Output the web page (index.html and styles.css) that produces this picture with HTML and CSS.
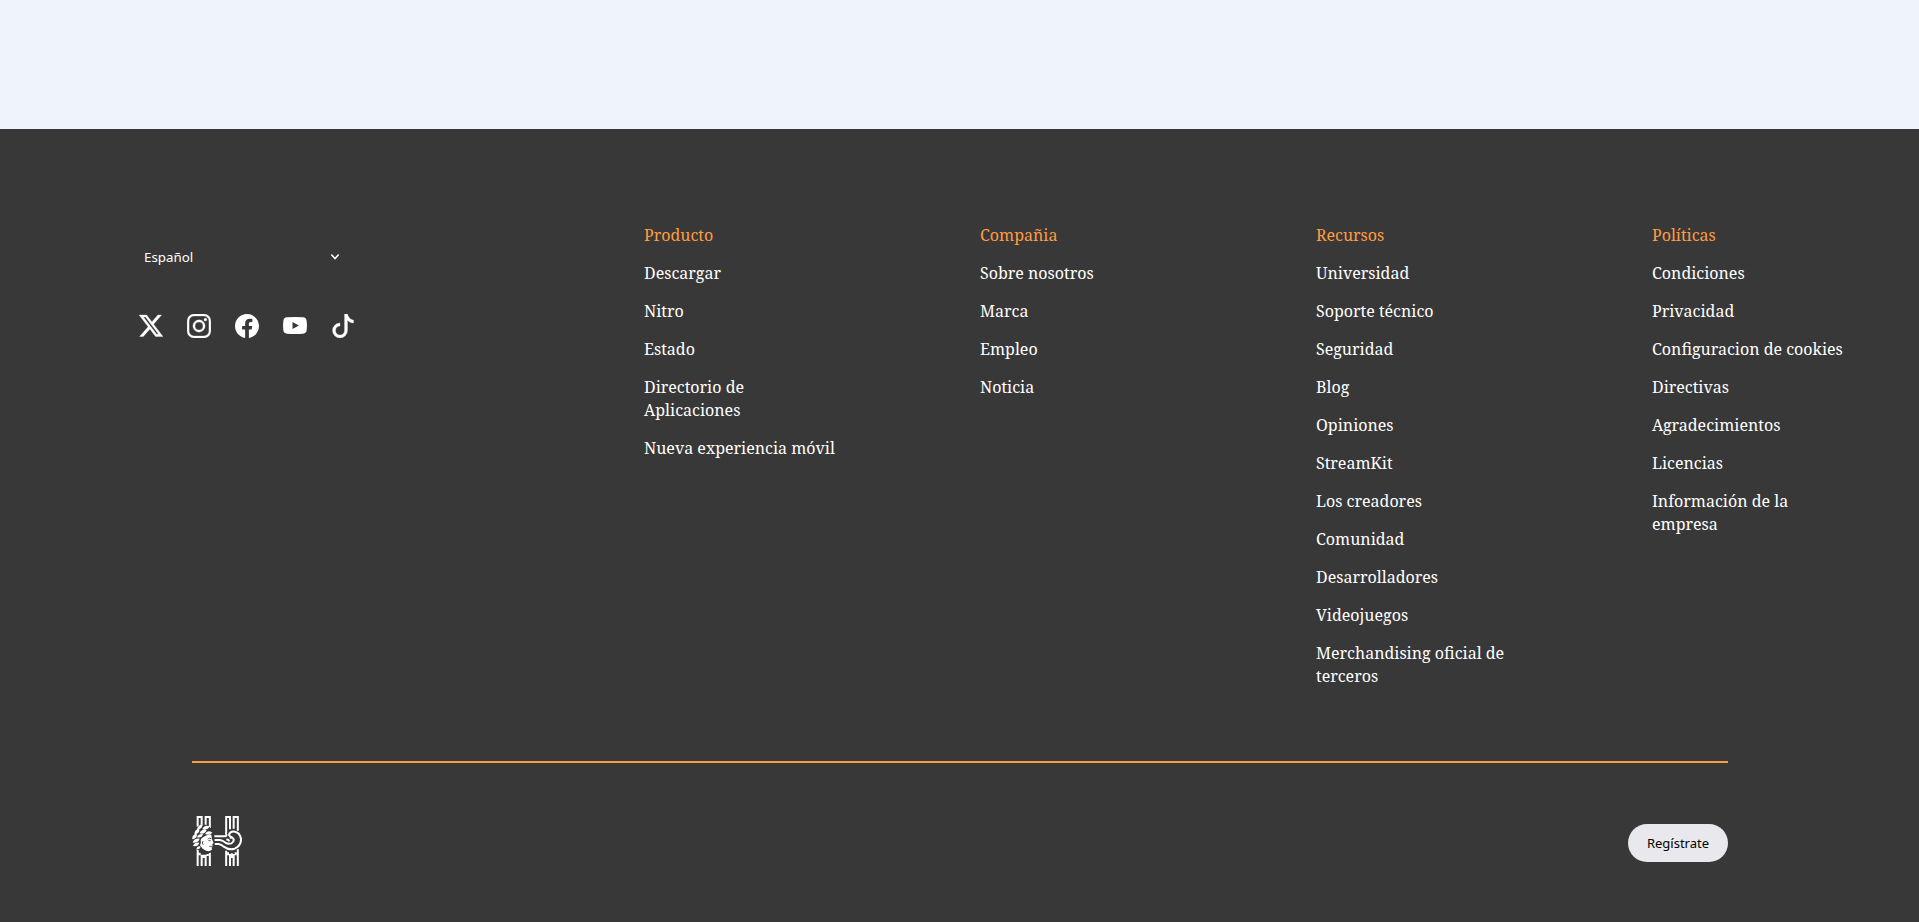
FILE: index.html
```html
<!DOCTYPE html>
<html lang="es">
<head>
<meta charset="utf-8">
<title>Pie de página</title>
<link rel="stylesheet" href="styles.css">
</head>
<body>
<main class="page-end"></main>
<footer class="footer">
  <div class="footer-top">
    <div class="footer-side">
      <div class="language">
        <span>Español</span>
        <svg class="chevron" viewBox="0 0 10 8"><path d="M1.3 1.6 5 5.6 8.7 1.6"/></svg>
      </div>
      <div class="social">
        <svg viewBox="1.1 1.3 21.8 21.8"><path stroke="#fff" stroke-width=".3" d="M18.244 2.25h3.308l-7.227 8.260 8.502 11.240H16.170l-5.214-6.817L4.990 21.750H1.680l7.730-8.835L1.254 2.250H8.080l4.713 6.231zm-1.161 17.520h1.833L7.084 4.126H5.117z"/></svg>
        <svg viewBox="0 0 24 24"><path fill-rule="evenodd" stroke="#fff" stroke-width=".25" d="M7 .1h10a6.900 6.900 0 0 1 6.900 6.900v10a6.900 6.900 0 0 1-6.900 6.900H7a6.900 6.900 0 0 1-6.900-6.900V7A6.900 6.900 0 0 1 7 .1zm0 2A4.900 4.900 0 0 0 2.100 7v10A4.900 4.900 0 0 0 7 21.900h10a4.900 4.900 0 0 0 4.900-4.900V7A4.900 4.900 0 0 0 17 2.100zM12 5.840a6.160 6.160 0 1 1 0 12.320 6.160 6.160 0 0 1 0-12.320zM12 8a4 4 0 1 0 0 8 4 4 0 0 0 0-8zM18.400 4.200a1.440 1.440 0 1 1 0 2.880 1.440 1.440 0 0 1 0-2.880z"/></svg>
        <svg viewBox="0 0 24 24"><path d="M24 12.073C24 5.405 18.627 0 12 0S0 5.405 0 12.073C0 18.100 4.388 23.094 10.125 24v-8.437H7.078v-3.490h3.047V9.413c0-3.026 1.792-4.697 4.533-4.697 1.312 0 2.686.236 2.686.236v2.971H15.830c-1.491 0-1.956.930-1.956 1.886v2.264h3.328l-.532 3.490h-2.796V24C19.612 23.094 24 18.100 24 12.073z"/></svg>
        <svg viewBox="0 0 24 24"><path fill-rule="evenodd" d="M4 3.300Q12 2.700 20 3.300 23.300 3.600 23.600 6.800 24.300 11.800 23.600 16.600 23.200 19.400 20 19.700 12 20.300 4 19.700.8 19.400.4 16.600-.3 11.800.4 6.800.7 3.600 4 3.300zM9.500 7.900v7.200L15.900 11.500z"/></svg>
        <svg viewBox="0 0 16 16"><path stroke="#fff" stroke-width=".15" d="M9 0h1.980c.144.715.540 1.617 1.235 2.512C12.895 3.389 13.797 4 15 4v2c-1.753 0-3.070-.814-4-1.829V11a5 5 0 1 1-5-5v2a3 3 0 1 0 3 3z"/></svg>
      </div>
    </div>
    <nav class="columns">
      <ul class="column"><li class="heading">Producto</li><li>Descargar</li><li>Nitro</li><li>Estado</li><li>Directorio de Aplicaciones</li><li>Nueva experiencia móvil</li></ul>
      <ul class="column"><li class="heading">Compañia</li><li>Sobre nosotros</li><li>Marca</li><li>Empleo</li><li>Noticia</li></ul>
      <ul class="column"><li class="heading">Recursos</li><li>Universidad</li><li>Soporte técnico</li><li>Seguridad</li><li>Blog</li><li>Opiniones</li><li>StreamKit</li><li>Los creadores</li><li>Comunidad</li><li>Desarrolladores</li><li>Videojuegos</li><li>Merchandising oficial de terceros</li></ul>
      <ul class="column"><li class="heading">Políticas</li><li>Condiciones</li><li>Privacidad</li><li>Configuracion de cookies</li><li>Directivas</li><li>Agradecimientos</li><li>Licencias</li><li>Información de la empresa</li></ul>
    </nav>
  </div>
  <div class="footer-bottom">
    <svg class="logo" viewBox="36 48 150 150">
      <!-- pillars -->
      <g class="line">
        <path d="M53 80V51H65V74M77 74V51H89.500V84M53 198V148M65 198V164M77 198V164M89.500 198V152M59 158V166M71 164V174M83 162V168"/>
        <path d="M138.500 98V51H150V88M161 86V51H173.500V92M138.500 198V152M150 198V162M161 198V162M173.500 198V148M144 157V166M155.500 160V174M167 157V166"/>
      </g>
      <!-- scroll linking both pillars -->
      <path class="gap" d="M98 124H120Q132 126 140 132C164 144 178 128 174 110Q168 97 154 101Q146 109 154 116Q160 126 148 126Q136 126 128 117L98 114"/>
      <g class="line">
        <path d="M96 109H134Q142 109 138 101V97M96 120H120Q129 121 136 128Q145 133 154 130Q164 125 160 116Q153 108 151 116M96 132H116Q124 133 131 140Q146 151 164 146Q184 137 183 117Q180 98 165 95Q150 93 147 105Q149 111 157 112M139 119Q145 118 148 124"/>
      </g>
      <!-- laurelled head -->
      <path class="gap" d="M45 90Q56 76 78 78Q94 84 100 102L102 134L94 155Q74 162 58 148Q40 142 40 116z"/>
      <path class="solid" d="M65 115Q74 107 88 103L94 104 96 118 101 129 97 132 98 139 95 143 96 149Q88 156 78 152L68 146 60 136Q64 128 62 120z"/>
      <g class="solid">
        <path d="M51 89Q53 75 68 73Q68 87 51 89zM67 88Q72 73 89 79Q83 92 67 88zM43 103Q44 87 58 87Q60 101 43 103zM59 100Q63 86 80 90Q75 104 59 100zM75 102Q83 88 97 98Q89 107 75 102zM37 118Q35 103 50 101Q54 115 37 118zM51 112Q54 101 69 102Q66 115 51 112zM38 128Q42 114 59 116Q56 129 38 128zM39 138Q44 126 58 128Q54 141 39 138zM49 148Q51 137 61 139Q63 147 49 148z"/>
      </g>
      <path class="detail" d="M83 117Q88 113 94 116M85 122H92M88 139H97M69 123Q64 130 70 135"/>
    </svg>
    <button class="signup">Regístrate</button>
  </div>
</footer>
</body>
</html>
```
FILE: styles.css
```css
* { box-sizing: border-box; }
body { margin: 0; height: 922px; overflow: hidden; background: #383838; }
.page-end { height: 129px; background: #eff3fc; }
.footer { height: 793px; background: #383838; color: #fff; font-family: "Noto Serif", "Liberation Serif", serif; font-size: 16px; }
.footer-top { display: flex; height: 632px; padding-top: 94.500px; }
.footer-side { width: 644px; padding: 23px 0 0 139px; }
.language { display: flex; align-items: center; justify-content: space-between; width: 196px; height: 20px; margin-left: 5px; font: 13.333px/20px "Noto Sans", sans-serif; }
.chevron { width: 10px; height: 8px; fill: none; stroke: #fff; stroke-width: 1.5; }
.social { display: flex; gap: 24px; margin-top: 47px; }
.social svg { width: 24px; height: 24px; fill: #fff; }
.columns { display: flex; gap: 136px; }
.column { display: flex; flex-direction: column; gap: 15px; width: 200px; margin: 0; padding: 0; list-style: none; line-height: 23px; }
.heading { color: #ff9c41; }
.footer-bottom { display: flex; align-items: flex-start; justify-content: space-between; width: 1536px; margin: 0 auto; padding-top: 53px; border-top: 2px solid #ff9c41; }
.logo { width: 50px; height: 50px; }
.line { fill: none; stroke: #fff; stroke-width: 6; }
.gap { fill: #383838; stroke: #383838; stroke-width: 5; }
.solid { fill: #fff; }
.detail { fill: none; stroke: #383838; stroke-width: 2.5; }
.signup { width: 100px; height: 38px; margin-top: 8px; padding: 0 0 0 1px; border: 0; border-radius: 19px; background: #e9e9ed; color: #000; font: 13px "Noto Sans", sans-serif; }
```
